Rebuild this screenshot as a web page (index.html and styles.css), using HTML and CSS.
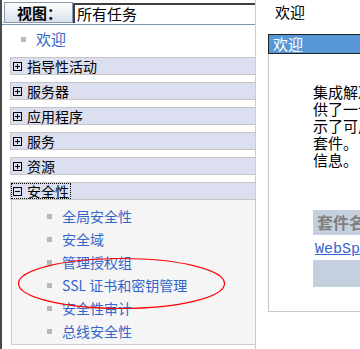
FILE: index.html
```html
<!DOCTYPE html>
<html lang="zh-CN">
<head>
<meta charset="UTF-8">
<title>集成解决方案控制台</title>
<link rel="stylesheet" href="styles.css">
</head>
<body>
<div class="page">
    <div class="side">
        <div class="viewbar">
            <div class="view-label">视图：</div>
            <div class="view-select">所有任务</div>
        </div>

        <div class="welcome"><span class="dot"></span><a href="#">欢迎</a></div>

        <ul class="tree">
            <li class="node"><svg class="tog" viewBox="0 0 9 9"><rect x=".5" y=".5" width="8" height="8"/><path d="M2 4.5h5M4.5 2v5"/></svg>指导性活动</li>
            <li class="node"><svg class="tog" viewBox="0 0 9 9"><rect x=".5" y=".5" width="8" height="8"/><path d="M2 4.5h5M4.5 2v5"/></svg>服务器</li>
            <li class="node"><svg class="tog" viewBox="0 0 9 9"><rect x=".5" y=".5" width="8" height="8"/><path d="M2 4.5h5M4.5 2v5"/></svg>应用程序</li>
            <li class="node"><svg class="tog" viewBox="0 0 9 9"><rect x=".5" y=".5" width="8" height="8"/><path d="M2 4.5h5M4.5 2v5"/></svg>服务</li>
            <li class="node"><svg class="tog" viewBox="0 0 9 9"><rect x=".5" y=".5" width="8" height="8"/><path d="M2 4.5h5M4.5 2v5"/></svg>资源</li>
            <li class="open">
                <div class="node"><span class="focus"><svg class="tog" viewBox="0 0 9 9"><rect x=".5" y=".5" width="8" height="8"/><path d="M2 4.5h5"/></svg>安全性</span></div>
                <ul class="sub">
                    <li><span class="dot"></span><a href="#">全局安全性</a></li>
                    <li><span class="dot"></span><a href="#">安全域</a></li>
                    <li><span class="dot"></span><a href="#">管理授权组</a></li>
                    <li><span class="dot"></span><a href="#">SSL 证书和密钥管理</a></li>
                    <li><span class="dot"></span><a href="#">安全性审计</a></li>
                    <li><span class="dot"></span><a href="#">总线安全性</a></li>
                </ul>
            </li>
        </ul>
    </div>

    <div class="main">
        <div class="title">欢迎</div>
        <div class="box">
            <div class="bar">欢迎</div>
            <div class="intro">
                <span>集成解决方案控制台为管理产品提</span>
                <span>供了一个统一的控制台。本页面显</span>
                <span>示了可用的控制台产品和控制台</span>
                <span>套件。</span>
                <span>信息。</span>
            </div>
            <div class="suites">
                <div class="suites-head">套件名称</div>
                <div class="suites-row"><a href="#">WebSphere Application Server</a></div>
            </div>
        </div>
    </div>
</div>

<svg class="mark" width="360" height="349" viewBox="0 0 360 349">
    <ellipse cx="121.5" cy="283.5" rx="103" ry="25"/>
</svg>
</body>
</html>
```

FILE: styles.css
```css
body {
    margin: 0;
    background-color: #ffffff;
    color: #000000;
    font-family: "Noto Sans CJK SC", "Noto Sans", sans-serif;
    font-size: 14px;
    overflow: hidden;
}

a {
    color: #3366cc;
    text-decoration: none;
}

ul {
    list-style: none;
    margin: 0;
    padding: 0;
}

.page {
    display: flex;
    width: 360px;
    height: 349px;
}

.side {
    width: 253px;
    flex: none;
    border-left: 2px solid #4a4a4a;
    border-right: 1px solid #cccccc;
}

.viewbar {
    display: flex;
    height: 23px;
    box-sizing: border-box;
    padding: 2px 0 0 2px;
    border-bottom: 1px solid #c8c8c8;
    box-shadow: 0 1px 0 #ffffff, 0 2px 0 #8195b2;
}

.view-label {
    width: 69px;
    height: 21px;
    box-sizing: border-box;
    border: 1px solid #8497b3;
    background: linear-gradient(#ffffff, #d9dfea);
    font-weight: bold;
    font-size: 15px;
    line-height: 19px;
    padding-left: 12px;
}

.view-select {
    flex: 1;
    margin: 1px 0 0 0;
    height: 20px;
    box-sizing: border-box;
    border-top: 2px solid #404040;
    border-left: 2px solid #404040;
    background-color: #ffffff;
    font-size: 15px;
    line-height: 17px;
    padding-left: 2px;
}

.dot {
    display: inline-block;
    width: 5px;
    height: 5px;
    background-color: #b8b8b8;
}

.welcome {
    display: flex;
    align-items: center;
    margin-top: 7px;
    height: 16px;
    padding-left: 19px;
    font-size: 15px;
}

.welcome .dot {
    margin: 3px 10px 0 0;
}

.tree {
    margin-top: 11px;
}

.node {
    display: flex;
    align-items: center;
    height: 18px;
    box-sizing: border-box;
    margin-left: 8px;
    border: 1px solid #c4c4c4;
    border-right: none;
    background-color: #dcdff0;
    margin-bottom: 7px;
}

.tog {
    width: 9px;
    height: 9px;
    margin: 0 5px 0 2px;
    fill: none;
    stroke: #000000;
    stroke-width: 1;
    shape-rendering: crispEdges;
}

.open > .node {
    margin-bottom: 0;
}

.focus {
    display: flex;
    align-items: center;
    height: 16px;
    padding-right: 2px;
    outline: 1px dotted #000000;
    outline-offset: -1px;
}

.sub {
    margin-left: 9px;
    height: 145px;
    border-left: 1px solid #cccccc;
    border-bottom: 1px solid #cccccc;
    background-color: #f5f5f5;
    padding-top: 4px;
    box-sizing: border-box;
}

.sub li {
    display: flex;
    align-items: center;
    height: 23px;
    padding-left: 35px;
}

.sub .dot {
    margin: 1px 10px 0 0;
}

.main {
    flex: 1;
    padding-left: 12px;
    overflow: hidden;
}

.title {
    height: 34px;
    padding-left: 7px;
    line-height: 24px;
    font-size: 15px;
}

.box {
    height: 278px;
    box-sizing: border-box;
    border-left: 1px solid #c8c8c8;
    border-bottom: 1px solid #c8c8c8;
}

.bar {
    height: 20px;
    box-sizing: border-box;
    margin-left: -1px;
    border: 1px solid #222222;
    border-right: none;
    background-color: #5897d6;
    color: #ffffff;
    font-size: 15px;
    line-height: 17px;
    padding-left: 4px;
}

.intro {
    margin-top: 29px;
    padding-left: 44px;
    font-size: 15px;
    line-height: 17px;
    white-space: nowrap;
}

.intro span {
    display: block;
}

.suites {
    margin: 42px 0 0 44px;
    height: 77px;
    background-color: #c5d0de;
    white-space: nowrap;
}

.suites-head {
    height: 25px;
    padding-left: 4px;
    color: #7f7f7f;
    font-weight: bold;
    font-size: 16px;
    line-height: 25px;
}

.suites-row {
    height: 25px;
    background-color: #ffffff;
    padding-left: 2px;
    line-height: 25px;
}

.suites-row a {
    font-family: "Liberation Mono", monospace;
    font-size: 15px;
    text-decoration: underline;
}

.mark {
    position: absolute;
    left: 0;
    top: 0;
    pointer-events: none;
}

.mark ellipse {
    fill: none;
    stroke: #ff0000;
    stroke-width: 1.2;
}
```
